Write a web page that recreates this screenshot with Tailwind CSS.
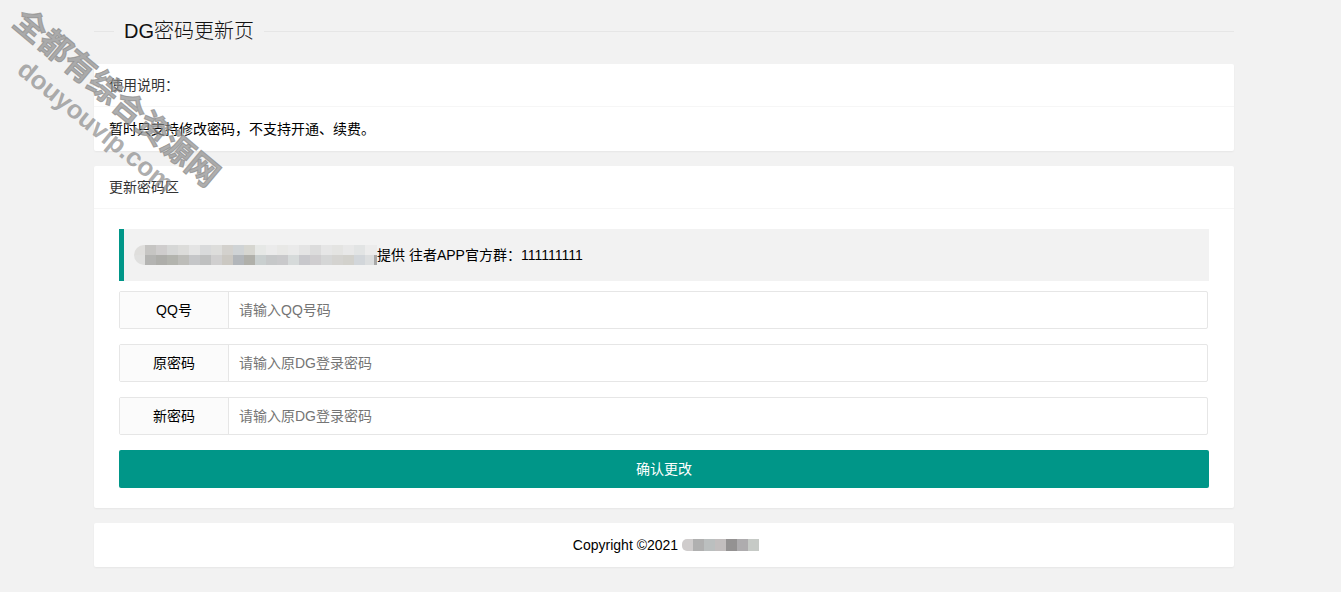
<!DOCTYPE html>
<html lang="zh-CN">
  <head>
    <meta charset="UTF-8" />
    <title>DG密码更新页</title>
    <script src="https://cdn.jsdelivr.net/npm/@tailwindcss/browser@4"></script>
  </head>
  <body class="relative h-[592px] overflow-hidden bg-[#f2f2f2] font-['Liberation_Sans','Noto_Sans_CJK_SC',sans-serif] text-sm text-[#333]">
    <div class="mx-[94px] w-[1140px]">
      <!-- title -->
      <div class="flex h-[64px] items-start pt-[31px]">
        <div class="w-5 border-t border-[#e6e6e6]"></div>
        <h1 class="-mt-3.5 px-2.5 text-xl leading-7 font-light text-[#111]">DG密码更新页</h1>
        <div class="flex-1 border-t border-[#e6e6e6]"></div>
      </div>

      <!-- notice -->
      <section class="rounded-[2px] bg-white shadow-[0_1px_2px_0_rgba(0,0,0,0.05)]">
        <div class="h-[43px] border-b border-[#f6f6f6] px-[15px] leading-[42px]">使用说明：</div>
        <div class="h-[44px] px-[15px] leading-[44px] text-black">暂时只支持修改密码，不支持开通、续费。</div>
      </section>

      <!-- form -->
      <section class="mt-[15px] rounded-[2px] bg-white shadow-[0_1px_2px_0_rgba(0,0,0,0.05)]">
        <div class="h-[43px] border-b border-[#f6f6f6] px-[15px] leading-[42px]">更新密码区</div>
        <div class="px-[25px] pt-5 pb-5">
          <div class="flex h-[52px] items-center border-l-[5px] border-[#009688] bg-[#f2f2f2] pl-[10px] text-black">
            <div class="flex h-[20px] w-[243px] flex-col overflow-hidden rounded-l-[10px]">
              <div class="flex h-[10px]">
                <i class="w-[11px] bg-[#dfdedc]"></i><i class="w-[11px] bg-[#c6c5c3]"></i><i class="w-[11px] bg-[#cfcdcd]"></i><i class="w-[11px] bg-[#d6d7d6]"></i><i class="w-[11px] bg-[#dcdcda]"></i><i class="w-[11px] bg-[#e4e4e4]"></i><i class="w-[11px] bg-[#d9dadb]"></i><i class="w-[11px] bg-[#dddddb]"></i><i class="w-[11px] bg-[#d3d1cd]"></i><i class="w-[11px] bg-[#cfd3d5]"></i><i class="w-[11px] bg-[#d6d6d0]"></i><i class="w-[11px] bg-[#e6e8e6]"></i><i class="w-[11px] bg-[#ebebeb]"></i><i class="w-[11px] bg-[#e8e8e6]"></i><i class="w-[11px] bg-[#eaeaea]"></i><i class="w-[11px] bg-[#e4e4e4]"></i><i class="w-[11px] bg-[#dcdcdc]"></i><i class="w-[11px] bg-[#e6e6e6]"></i><i class="w-[11px] bg-[#e4e4e2]"></i><i class="w-[11px] bg-[#e8e8e8]"></i><i class="w-[11px] bg-[#e2e4e4]"></i><i class="w-[12px] bg-[#ececec]"></i>
              </div>
              <div class="flex h-[10px]">
                <i class="w-[11px] bg-[#e0e0df]"></i><i class="w-[11px] bg-[#b4b4b2]"></i><i class="w-[11px] bg-[#aeaeaa]"></i><i class="w-[11px] bg-[#b3b4ae]"></i><i class="w-[11px] bg-[#bdbdb9]"></i><i class="w-[11px] bg-[#c5c6c8]"></i><i class="w-[11px] bg-[#bfc0c0]"></i><i class="w-[11px] bg-[#d0cfcf]"></i><i class="w-[11px] bg-[#cbc8c2]"></i><i class="w-[11px] bg-[#b2b6ba]"></i><i class="w-[11px] bg-[#b0b0aa]"></i><i class="w-[11px] bg-[#c9cfcf]"></i><i class="w-[11px] bg-[#c6c8c9]"></i><i class="w-[11px] bg-[#c9c9cb]"></i><i class="w-[11px] bg-[#d6dada]"></i><i class="w-[11px] bg-[#c8c8cc]"></i><i class="w-[11px] bg-[#cfcdcf]"></i><i class="w-[11px] bg-[#d5d6d6]"></i><i class="w-[11px] bg-[#d4d3d0]"></i><i class="w-[11px] bg-[#d2d1cc]"></i><i class="w-[11px] bg-[#d2d6da]"></i><i class="w-[9px] bg-[#dcdedf]"></i><i class="w-[3px] bg-[#a8a8a8]"></i>
              </div>
            </div>
            <span>提供 往者APP官方群：111111111</span>
          </div>

          <div class="mt-2.5 flex h-[38px] w-[1089px] rounded-[2px] border border-[#e6e6e6]">
            <label class="w-[109px] shrink-0 border-r border-[#e6e6e6] bg-[#fbfbfb] text-center leading-9 text-black">QQ号</label>
            <input class="flex-1 pl-2.5 outline-none placeholder:text-[#757575]" placeholder="请输入QQ号码" />
          </div>
          <div class="mt-[15px] flex h-[38px] w-[1089px] rounded-[2px] border border-[#e6e6e6]">
            <label class="w-[109px] shrink-0 border-r border-[#e6e6e6] bg-[#fbfbfb] text-center leading-9 text-black">原密码</label>
            <input class="flex-1 pl-2.5 outline-none placeholder:text-[#757575]" placeholder="请输入原DG登录密码" />
          </div>
          <div class="mt-[15px] flex h-[38px] w-[1089px] rounded-[2px] border border-[#e6e6e6]">
            <label class="w-[109px] shrink-0 border-r border-[#e6e6e6] bg-[#fbfbfb] text-center leading-9 text-black">新密码</label>
            <input class="flex-1 pl-2.5 outline-none placeholder:text-[#757575]" placeholder="请输入原DG登录密码" />
          </div>

          <button class="mt-[15px] block h-[38px] w-full rounded-[2px] bg-[#009688] text-center text-white">确认更改</button>
        </div>
      </section>

      <!-- footer -->
      <footer class="mt-[15px] flex h-[44px] items-center justify-center gap-1 rounded-[2px] bg-white pl-1 text-black shadow-[0_1px_2px_0_rgba(0,0,0,0.05)]">
        <span>Copyright ©2021</span>
        <div class="flex h-[12px] overflow-hidden rounded-l-[5px]">
          <i class="w-[11px] bg-[#cfcccc]"></i><i class="w-[11px] bg-[#b0b0b0]"></i><i class="w-[11px] bg-[#bbbfbf]"></i><i class="w-[11px] bg-[#c2bebe]"></i><i class="w-[11px] bg-[#949292]"></i><i class="w-[11px] bg-[#aeacae]"></i><i class="w-[11px] bg-[#c6cac6]"></i>
        </div>
      </footer>
    </div>

    <!-- watermark -->
    <div class="pointer-events-none absolute top-[80px] left-[-12px] w-[257px] rotate-[40deg] text-center text-[32px] leading-9 font-bold whitespace-nowrap text-[#8a8a8a]/70 [-webkit-text-stroke:1px_rgba(138,138,138,0.7)]">全都有综合资源网</div>
    <div class="pointer-events-none absolute top-[110px] left-0 w-[192px] rotate-[39deg] text-center font-['Liberation_Sans',sans-serif] text-[26px] leading-8 font-bold whitespace-nowrap text-[#8a8a8a]/70">douyouvip.com</div>
  </body>
</html>
